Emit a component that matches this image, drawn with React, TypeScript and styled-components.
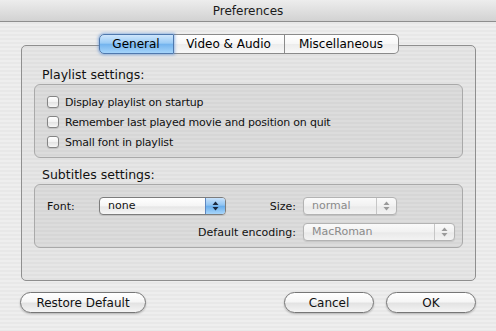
import styled, { createGlobalStyle } from "styled-components";

const GlobalStyle = createGlobalStyle`
  html, body { margin: 0; padding: 0; }
  body { font-family: "DejaVu Sans", "Liberation Sans", sans-serif; color: #000; }
`;

const Window = styled.div`
  width: 496px;
  height: 331px;
  display: flex;
  flex-direction: column;
  overflow: hidden;
  background: repeating-linear-gradient(to bottom, #eeeeee 0 2px, #e8e8e8 2px 4px);
`;

const TitleBar = styled.div`
  flex: none;
  height: 21px;
  display: flex;
  align-items: center;
  justify-content: center;
  border-bottom: 1px solid #8e8e8e;
  background: linear-gradient(#ededed, #d2d2d2);
  font-size: 12px;
  color: #1a1a1a;
`;

const Body = styled.div`
  display: flex;
  flex-direction: column;
  padding: 12px 20px 0 20px;
`;

const TabBar = styled.div`
  position: relative;
  z-index: 1;
  display: flex;
  justify-content: center;
  height: 20px;
  padding-left: 1px;
`;

const Tab = styled.div<{ $w: number; $active?: boolean; $first?: boolean; $last?: boolean }>`
  box-sizing: border-box;
  width: ${(p) => p.$w}px;
  height: 20px;
  display: flex;
  align-items: center;
  justify-content: center;
  font-size: 12px;
  border: 1px solid ${(p) => (p.$active ? "#4f78ad" : "#8a8a8a")};
  border-left-width: ${(p) => (p.$first || p.$active ? 1 : 0)}px;
  border-radius: ${(p) => (p.$first ? "5px 0 0 5px" : p.$last ? "0 5px 5px 0" : "0")};
  background: ${(p) =>
    p.$active
      ? "linear-gradient(#cfe6fc 0%, #9acbf5 45%, #74b4ee 52%, #a5d4fa 100%)"
      : "linear-gradient(#ffffff 0%, #f7f7f7 48%, #ececec 52%, #f8f8f8 100%)"};
  box-shadow: ${(p) => (p.$active ? "0 0 3px 1px rgba(70, 130, 210, 0.55)" : "none")};
  position: relative;
  z-index: ${(p) => (p.$active ? 1 : 0)};
`;

const Panel = styled.div`
  box-sizing: border-box;
  margin: -9px 0 0 1px;
  height: 236px;
  border: 1px solid #8f8f8f;
  border-radius: 5px;
  background: rgba(0, 0, 0, 0.03);
  padding: 21px 12px 0 12px;
  display: flex;
  flex-direction: column;
`;

const SectionLabel = styled.div<{ $gap?: number }>`
  height: 16px;
  line-height: 16px;
  font-size: 12.5px;
  padding-left: 8px;
  margin-top: ${(p) => p.$gap ?? 0}px;
  margin-bottom: 1px;
  color: #111;
`;

const GroupBox = styled.div<{ $h: number }>`
  box-sizing: border-box;
  height: ${(p) => p.$h}px;
  border: 1px solid #a9a9a9;
  border-radius: 6px;
  background: rgba(0, 0, 0, 0.045);
`;

const CheckList = styled(GroupBox)`
  padding: 7px 12px 0 12px;
`;

const CheckRow = styled.label`
  height: 20px;
  display: flex;
  align-items: center;
  gap: 6px;
  font-size: 11px;
  letter-spacing: -0.2px;
  color: #111;
`;

const CheckBox = styled.span`
  box-sizing: border-box;
  width: 12px;
  height: 12px;
  border: 1px solid #858585;
  border-radius: 3px;
  background: linear-gradient(#ffffff, #f2f2f2 50%, #e4e4e4 55%, #f6f6f6);
  box-shadow: 0 1px 1px rgba(0, 0, 0, 0.12);
`;

const SubGrid = styled(GroupBox)`
  display: grid;
  grid-template-columns: 52px 127px 1fr 94px 58px;
  grid-template-rows: 18px 18px;
  row-gap: 8px;
  align-items: center;
  padding: 12px 7px 0 12px;
`;

const FieldLabel = styled.div<{ $right?: boolean; $span?: string }>`
  font-size: 11px;
  color: #111;
  text-align: ${(p) => (p.$right ? "right" : "left")};
  padding-right: ${(p) => (p.$right ? 7 : 0)}px;
  grid-column: ${(p) => p.$span ?? "auto"};
  white-space: nowrap;
`;

const Popup = styled.div<{ $disabled?: boolean; $span?: string }>`
  box-sizing: border-box;
  grid-column: ${(p) => p.$span ?? "auto"};
  height: 18px;
  display: flex;
  align-items: stretch;
  border: 1px solid ${(p) => (p.$disabled ? "#b3b3b3" : "#7d7d7d")};
  border-radius: 4px;
  overflow: hidden;
  background: ${(p) =>
    p.$disabled
      ? "linear-gradient(#fafafa, #f1f1f1 50%, #e9e9e9 55%, #f3f3f3)"
      : "linear-gradient(#ffffff, #f5f5f5 50%, #e6e6e6 55%, #f7f7f7)"};
  box-shadow: 0 1px 1px rgba(0, 0, 0, 0.1);
`;

const PopupText = styled.span<{ $disabled?: boolean }>`
  flex: 1;
  padding-left: 8px;
  font-size: 11px;
  line-height: 16px;
  color: ${(p) => (p.$disabled ? "#8a8a8a" : "#111")};
`;

const ArrowBox = styled.span<{ $disabled?: boolean }>`
  width: 19px;
  display: flex;
  align-items: center;
  justify-content: center;
  border-left: 1px solid ${(p) => (p.$disabled ? "#c6c6c6" : "#5d87c0")};
  background: ${(p) =>
    p.$disabled
      ? "transparent"
      : "linear-gradient(#c9e2fb 0%, #8fc4f3 45%, #6aaeec 52%, #a8d6fb 100%)"};
`;

const Footer = styled.div`
  display: flex;
  justify-content: space-between;
  margin-top: 11px;
`;

const ButtonGroup = styled.div`
  display: flex;
  gap: 12px;
`;

const PushButton = styled.div<{ $w: number }>`
  box-sizing: border-box;
  width: ${(p) => p.$w}px;
  height: 21px;
  display: flex;
  align-items: center;
  justify-content: center;
  font-size: 12px;
  color: #111;
  border: 1px solid #767676;
  border-radius: 11px;
  background: linear-gradient(#ffffff 0%, #f6f6f6 45%, #e3e3e3 55%, #f4f4f4 100%);
  box-shadow: 0 1px 2px rgba(0, 0, 0, 0.25);
`;

function Arrows({ disabled }: { disabled?: boolean }) {
  const c = disabled ? "#9a9a9a" : "#1c2a40";
  return (
    <svg width="7" height="10" viewBox="0 0 7 10">
      <path d="M3.5 0.5 L6.5 4 L0.5 4 Z" fill={c} />
      <path d="M0.5 6 L6.5 6 L3.5 9.5 Z" fill={c} />
    </svg>
  );
}

const checks = [
  "Display playlist on startup",
  "Remember last played movie and position on quit",
  "Small font in playlist",
];

export default function App() {
  return (
    <Window>
      <GlobalStyle />
      <TitleBar>Preferences</TitleBar>
      <Body>
        <TabBar>
          <Tab $w={75} $active $first>
            General
          </Tab>
          <Tab $w={111}>Video &amp; Audio</Tab>
          <Tab $w={114} $last>
            Miscellaneous
          </Tab>
        </TabBar>
        <Panel>
          <SectionLabel>Playlist settings:</SectionLabel>
          <CheckList $h={74}>
            {checks.map((c) => (
              <CheckRow key={c}>
                <CheckBox />
                {c}
              </CheckRow>
            ))}
          </CheckList>
          <SectionLabel $gap={9}>Subtitles settings:</SectionLabel>
          <SubGrid $h={64}>
            <FieldLabel>Font:</FieldLabel>
            <Popup>
              <PopupText>none</PopupText>
              <ArrowBox>
                <Arrows />
              </ArrowBox>
            </Popup>
            <FieldLabel $right>Size:</FieldLabel>
            <Popup $disabled>
              <PopupText $disabled>normal</PopupText>
              <ArrowBox $disabled>
                <Arrows disabled />
              </ArrowBox>
            </Popup>
            <span />
            <FieldLabel $right $span="1 / 4">
              Default encoding:
            </FieldLabel>
            <Popup $disabled $span="4 / 6">
              <PopupText $disabled>MacRoman</PopupText>
              <ArrowBox $disabled>
                <Arrows disabled />
              </ArrowBox>
            </Popup>
          </SubGrid>
        </Panel>
        <Footer>
          <PushButton $w={126}>Restore Default</PushButton>
          <ButtonGroup>
            <PushButton $w={90}>Cancel</PushButton>
            <PushButton $w={90}>OK</PushButton>
          </ButtonGroup>
        </Footer>
      </Body>
    </Window>
  );
}
